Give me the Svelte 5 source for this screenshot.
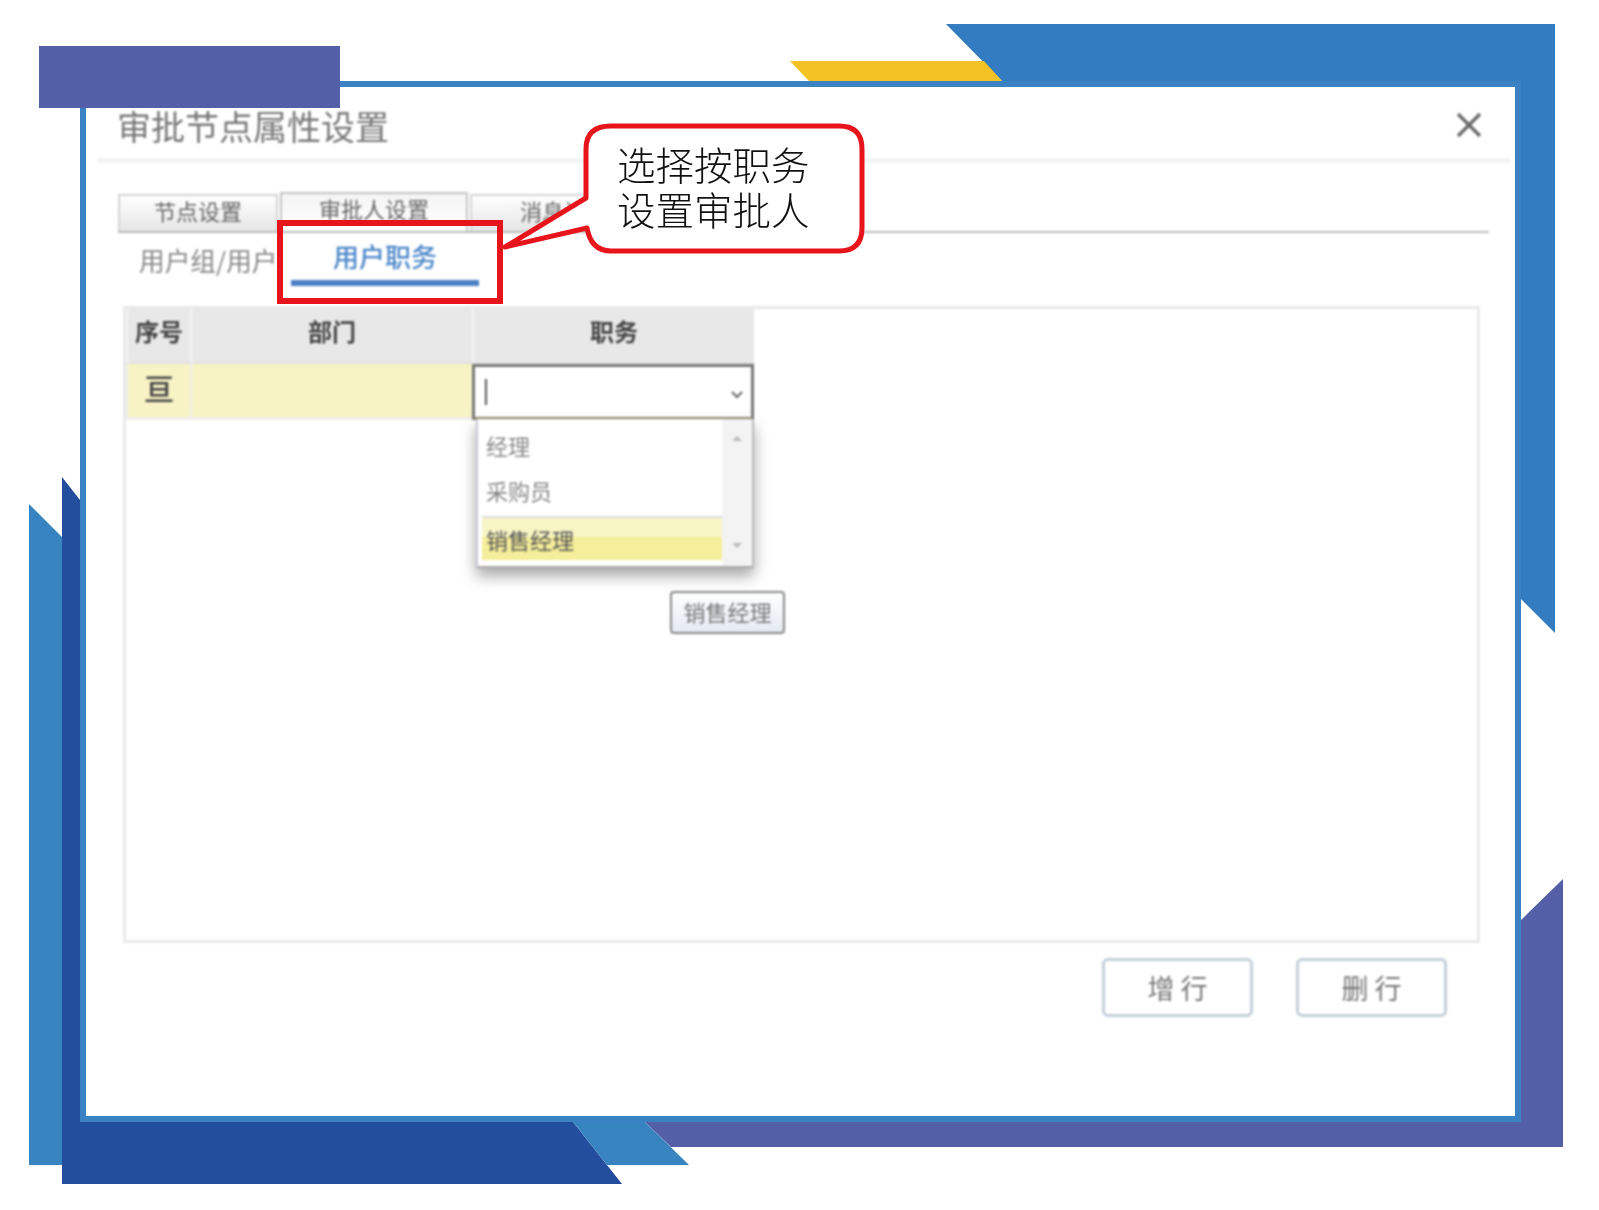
<script>
  let columns = ['部门', '职务']
  let options = ['经理', '采购员']
</script>

<div class="page">
  <svg class="decor" width="1599" height="1210" viewBox="0 0 1599 1210">
    <polygon fill="#347cc1" points="946,24 1555,24 1555,633 1520,598 1520,81 1002,81" />
    <polygon fill="#f4c224" points="790,61 984,61 1002,81 809,81" />
    <polygon fill="#3784c0" points="29,504 62,537 62,1165 29,1165" />
    <polygon fill="#234e9e" points="62,477 80,500 80,1122 573,1122 622,1184 62,1184" />
    <polygon fill="#3784c0" points="573,1122 645,1122 689,1165 607,1165" />
    <polygon fill="#5360a8" points="645,1122 1520,1122 1520,921 1563,879 1563,1147 671,1147" />
  </svg>

  <div class="frame">
    <div class="body">
      <div class="head">
        <span class="title">审批节点属性设置</span>
        <svg class="close" width="26" height="26" viewBox="0 0 26 26">
          <path d="M2 2 L24 24 M24 2 L2 24" stroke="#666" stroke-width="3.2" fill="none" />
        </svg>
      </div>

      <div class="tabs">
        <div class="tab first">节点设置</div>
        <div class="tab second">审批人设置</div>
        <div class="tab third">消息设置</div>
      </div>

      <div class="subtabs">
        <div class="sub">用户组/用户</div>
        <div class="sub on">用户职务</div>
      </div>

      <div class="gridbox">
        <div class="table">
          <div class="th">序号</div>
          {#each columns as c}
            <div class="th">{c}</div>
          {/each}
          <div class="td num">亘</div>
          <div class="td"></div>
          <div class="select">
            <span class="caret"></span>
            <svg class="chev" width="14" height="10" viewBox="0 0 14 10">
              <path d="M2 2 L7 7 L12 2" stroke="#666" stroke-width="2" fill="none" />
            </svg>
          </div>
        </div>

        <div class="dropdown">
          <div class="list">
            {#each options as o}
              <div class="opt">{o}</div>
            {/each}
            <div class="opt sel">销售经理</div>
          </div>
          <div class="scroll">
            <svg width="12" height="8" viewBox="0 0 12 8"><path d="M1 7 L6 2 L11 7Z" fill="#bbb" /></svg>
            <svg width="12" height="8" viewBox="0 0 12 8"><path d="M1 1 L6 6 L11 1Z" fill="#bbb" /></svg>
          </div>
        </div>
        <div class="tip">销售经理</div>
      </div>

      <div class="actions">
        <div class="btn">增 行</div>
        <div class="btn">删 行</div>
      </div>
    </div>

    <div class="redbox"></div>
    <div class="callout">
      <svg width="390" height="140" viewBox="0 0 390 140">
        <path d="M114 3 H342 Q365 3 365 26 V105 Q365 128 342 128 H114 Q94 128 90 105 L8 124 L89 75 V26 Q89 3 114 3Z" fill="#fff" stroke="#e8141c" stroke-width="5" stroke-linejoin="round" />
      </svg>
      <div class="say">选择按职务<br />设置审批人</div>
    </div>
  </div>

  <div class="tag"></div>
</div>

<style>
  :global(body) {
    margin: 0;
    background: #fff;
  }

  .page {
    position: relative;
    width: 1599px;
    height: 1210px;
    overflow: hidden;
    padding: 81px 0 0 80px;
    box-sizing: border-box;
    font-family: "Noto Sans CJK SC", "Liberation Sans", sans-serif;
  }

  .decor {
    position: absolute;
    left: 0;
    top: 0;
  }

  .tag {
    position: absolute;
    left: 39px;
    top: 46px;
    width: 301px;
    height: 62px;
    background: #5360a8;
  }

  .frame {
    position: relative;
    width: 1441px;
    height: 1041px;
    box-sizing: border-box;
    border: 6px solid #3b82c5;
    background: #fff;
  }

  .body {
    position: relative;
    height: 100%;
    filter: blur(0.8px);
  }

  .head {
    display: flex;
    justify-content: space-between;
    align-items: center;
    height: 71px;
    margin: 0 5px 0 11px;
    padding: 0 28px 0 20px;
    border-bottom: 5px solid #f3f3f3;
  }

  .title {
    font-size: 34px;
    line-height: 1;
    color: #777;
    margin-top: 6px;
  }

  .close {
    margin-top: 4px;
  }

  .tabs {
    display: flex;
    align-items: flex-end;
    gap: 2px;
    height: 39px;
    margin: 29px 26px 0 32px;
    border-bottom: 2px solid #bbb;
  }

  .tab {
    box-sizing: border-box;
    height: 37px;
    display: flex;
    align-items: flex-start;
    justify-content: center;
    font-size: 22px;
    line-height: 28px;
    color: #666;
    border: 2px solid #d4d4d4;
    border-bottom: 0;
    background: linear-gradient(#fff, #e6e6e6);
  }

  .first {
    width: 160px;
  }

  .second {
    width: 188px;
    height: 39px;
    background: linear-gradient(#f4f4f4, #fff);
    border-color: #c4c4c4;
  }

  .third {
    width: 180px;
    padding-left: 8px;
  }

  .subtabs {
    display: flex;
    height: 53px;
    margin-left: 32px;
  }

  .sub {
    width: 173px;
    padding: 6px 0 0 21px;
    box-sizing: border-box;
    font-size: 25.7px;
    line-height: 42px;
    color: #888;
    white-space: nowrap;
  }

  .sub.on {
    width: 188px;
    padding: 1px 0 0;
    margin-top: 1px;
    text-align: center;
    font-size: 26px;
    font-weight: 500;
    color: #4a86c8;
    border-bottom: 6px solid #4a80c4;
  }

  .redbox {
    position: absolute;
    left: 191px;
    top: 133px;
    width: 226px;
    height: 84px;
    box-sizing: border-box;
    border: 6px solid #e8141c;
    filter: blur(0.4px);
  }

  .gridbox {
    position: relative;
    box-sizing: border-box;
    width: 1357px;
    height: 637px;
    margin: 20px 0 0 37px;
    border: 3px solid #e9e9e9;
  }

  .table {
    display: grid;
    grid-template-columns: 64px 282px 282px;
    grid-template-rows: 55px 56px;
    width: 628px;
  }

  .th {
    display: flex;
    justify-content: center;
    align-items: center;
    padding-bottom: 10px;
    box-sizing: border-box;
    background: #e8e8e8;
    border-left: 2px solid #f4f4f4;
    border-bottom: 2px solid #e0e0e0;
    font-size: 24px;
    font-weight: 700;
    color: #444;
  }

  .td {
    background: #f8f3c5;
    border-left: 2px solid #eee;
    border-bottom: 3px solid #eeeeea;
  }

  .num {
    display: flex;
    justify-content: center;
    align-items: center;
    padding-bottom: 8px;
    font-size: 30px;
    font-weight: 500;
    color: #444;
  }

  .select {
    position: relative;
    display: flex;
    align-items: center;
    justify-content: space-between;
    box-sizing: border-box;
    padding: 0 7px 0 10px;
    background: #fff;
    border: 3px solid #777;
    border-bottom-color: #8f8a6c;
  }

  .caret {
    width: 2px;
    height: 26px;
    background: #555;
  }

  .chev {
    margin-top: 6px;
  }

  .dropdown {
    position: absolute;
    left: 350px;
    top: 110px;
    width: 278px;
    height: 149px;
    box-sizing: border-box;
    display: flex;
    background: #fff;
    border: 2px solid #c9c9d6;
    border-top: 0;
    border-right-color: #bbb;
    border-bottom-color: #aaa;
    box-shadow: 0 8px 14px rgba(0, 0, 0, 0.35);
  }

  .list {
    flex: 1;
    display: flex;
    flex-direction: column;
    padding-top: 4px;
  }

  .opt {
    height: 45px;
    line-height: 45px;
    padding-left: 8px;
    font-size: 22px;
    color: #888;
  }

  .sel {
    height: 42px;
    line-height: 42px;
    margin: 3px 0 0 4px;
    padding-left: 4px;
    color: #555;
    background: linear-gradient(#f8f5c4 0 45%, #f5ee9a 45%);
    border-top: 2px solid #ddd;
  }

  .scroll {
    width: 30px;
    background: #f3f3f3;
    display: flex;
    flex-direction: column;
    justify-content: space-between;
    align-items: center;
    padding: 15px 0 16px;
    box-sizing: border-box;
  }

  .tip {
    position: absolute;
    left: 544px;
    top: 282px;
    width: 115px;
    height: 43px;
    box-sizing: border-box;
    display: flex;
    align-items: center;
    justify-content: center;
    padding-bottom: 4px;
    font-size: 22px;
    color: #777;
    border: 2px solid #888;
    border-radius: 4px;
    background: linear-gradient(#fff, #e5eaf2);
  }

  .actions {
    display: flex;
    justify-content: flex-end;
    gap: 43px;
    margin: 15px 68px 0 0;
  }

  .btn {
    width: 151px;
    height: 59px;
    box-sizing: border-box;
    display: flex;
    align-items: center;
    justify-content: center;
    font-size: 27px;
    color: #777;
    border: 3px solid #c5cfd9;
    border-radius: 6px;
  }

  .callout {
    position: absolute;
    left: 411px;
    top: 36px;
    width: 390px;
    height: 140px;
    filter: blur(0.4px);
  }

  .say {
    position: absolute;
    left: 120px;
    top: 18px;
    font-size: 38.5px;
    line-height: 45px;
    font-weight: 300;
    color: #111;
    white-space: nowrap;
  }
</style>
